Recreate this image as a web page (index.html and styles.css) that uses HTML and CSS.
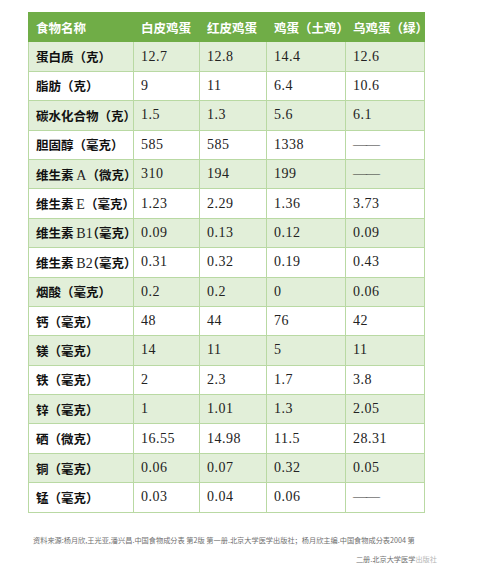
FILE: index.html
```html
<!DOCTYPE html>
<html lang="zh-CN">
<head>
<meta charset="utf-8">
<title>鸡蛋营养成分</title>
<link rel="stylesheet" href="styles.css">
</head>
<body>
<div class="page">
  <table class="nutri">
    <colgroup>
      <col class="c-name"><col class="c-a"><col class="c-b"><col class="c-c"><col class="c-d">
    </colgroup>
    <thead>
      <tr><th>食物名称</th><th>白皮鸡蛋</th><th>红皮鸡蛋</th><th>鸡蛋（土鸡）</th><th>乌鸡蛋（绿）</th></tr>
    </thead>
    <tbody>
      <tr><td class="n">蛋白质（克）</td><td>12.7</td><td>12.8</td><td>14.4</td><td>12.6</td></tr>
      <tr><td class="n">脂肪（克）</td><td>9</td><td>11</td><td>6.4</td><td>10.6</td></tr>
      <tr><td class="n">碳水化合物（克）</td><td>1.5</td><td>1.3</td><td>5.6</td><td>6.1</td></tr>
      <tr><td class="n">胆固醇（毫克）</td><td>585</td><td>585</td><td>1338</td><td class="dash">——</td></tr>
      <tr><td class="n">维生素 <span class="lat">A</span>（微克）</td><td>310</td><td>194</td><td>199</td><td class="dash">——</td></tr>
      <tr><td class="n">维生素 <span class="lat">E</span>（毫克）</td><td>1.23</td><td>2.29</td><td>1.36</td><td>3.73</td></tr>
      <tr><td class="n halt">维生素 <span class="lat">B1</span>（毫克）</td><td>0.09</td><td>0.13</td><td>0.12</td><td>0.09</td></tr>
      <tr><td class="n halt">维生素 <span class="lat">B2</span>（毫克）</td><td>0.31</td><td>0.32</td><td>0.19</td><td>0.43</td></tr>
      <tr><td class="n">烟酸（毫克）</td><td>0.2</td><td>0.2</td><td>0</td><td>0.06</td></tr>
      <tr><td class="n">钙（毫克）</td><td>48</td><td>44</td><td>76</td><td>42</td></tr>
      <tr><td class="n">镁（毫克）</td><td>14</td><td>11</td><td>5</td><td>11</td></tr>
      <tr><td class="n">铁（毫克）</td><td>2</td><td>2.3</td><td>1.7</td><td>3.8</td></tr>
      <tr><td class="n">锌（毫克）</td><td>1</td><td>1.01</td><td>1.3</td><td>2.05</td></tr>
      <tr><td class="n">硒（微克）</td><td>16.55</td><td>14.98</td><td>11.5</td><td>28.31</td></tr>
      <tr><td class="n">铜（毫克）</td><td>0.06</td><td>0.07</td><td>0.32</td><td>0.05</td></tr>
      <tr><td class="n">锰（毫克）</td><td>0.03</td><td>0.04</td><td>0.06</td><td class="dash">——</td></tr>
    </tbody>
  </table>
  <div class="source">
    <p class="l1">资料来源:杨月欣,王光亚,潘兴昌.中国食物成分表 第2版 第一册.北京大学医学出版社；杨月欣主编.中国食物成分表2004 第</p>
    <p class="l2">二册.北京大学医学<span class="fade">出版社</span></p>
  </div>
</div>
</body>
</html>
```

FILE: styles.css
```css
html, body {
  margin: 0;
  padding: 0;
  background: #ffffff;
}

.page {
  padding: 12px 0 0 28px;
}

.nutri {
  border-collapse: collapse;
  table-layout: fixed;
  width: 396px;
  font-family: "Liberation Serif", "Noto Sans CJK SC", serif;
  font-size: 14px;
  color: #222222;
}

.c-name { width: 105px; }
.c-a { width: 66px; }
.c-b { width: 67px; }
.c-c { width: 79px; }
.c-d { width: 79px; }

.nutri th,
.nutri td {
  height: 29.4px;
  padding: 0 0 0 7px;
  text-align: left;
  vertical-align: middle;
  white-space: nowrap;
  box-sizing: border-box;
}

.nutri thead th {
  background: #70ad47;
  color: #ffffff;
  font-family: "Noto Sans CJK SC", sans-serif;
  font-weight: 700;
  font-size: 12.5px;
  border: 1px solid #70ad47;
}

.nutri td {
  border: 1px solid #b9d9a3;
  letter-spacing: 0.5px;
}

.nutri tbody tr:nth-child(odd) td {
  background: #e2efd9;
}

.nutri td.n {
  font-family: "Noto Sans CJK SC", sans-serif;
  font-weight: 700;
  font-size: 12.5px;
  letter-spacing: 0;
  color: #111111;
}

.nutri td.halt {
  font-feature-settings: "halt";
}

.nutri td.n .lat {
  font-family: "Liberation Serif", serif;
  font-weight: 400;
  font-size: 14px;
  color: #222222;
}

.nutri td.dash {
  letter-spacing: -1px;
  color: #333333;
}

.source {
  width: 404px;
  margin: 18px 0 0 5px;
  font-family: "Noto Sans CJK SC", sans-serif;
  font-size: 7.2px;
  color: #6f6f6f;
}

.source p {
  margin: 0;
  line-height: 19px;
  white-space: nowrap;
}

.source .l2 {
  text-align: right;
}

.source .fade {
  color: #b5b5b5;
}
```
